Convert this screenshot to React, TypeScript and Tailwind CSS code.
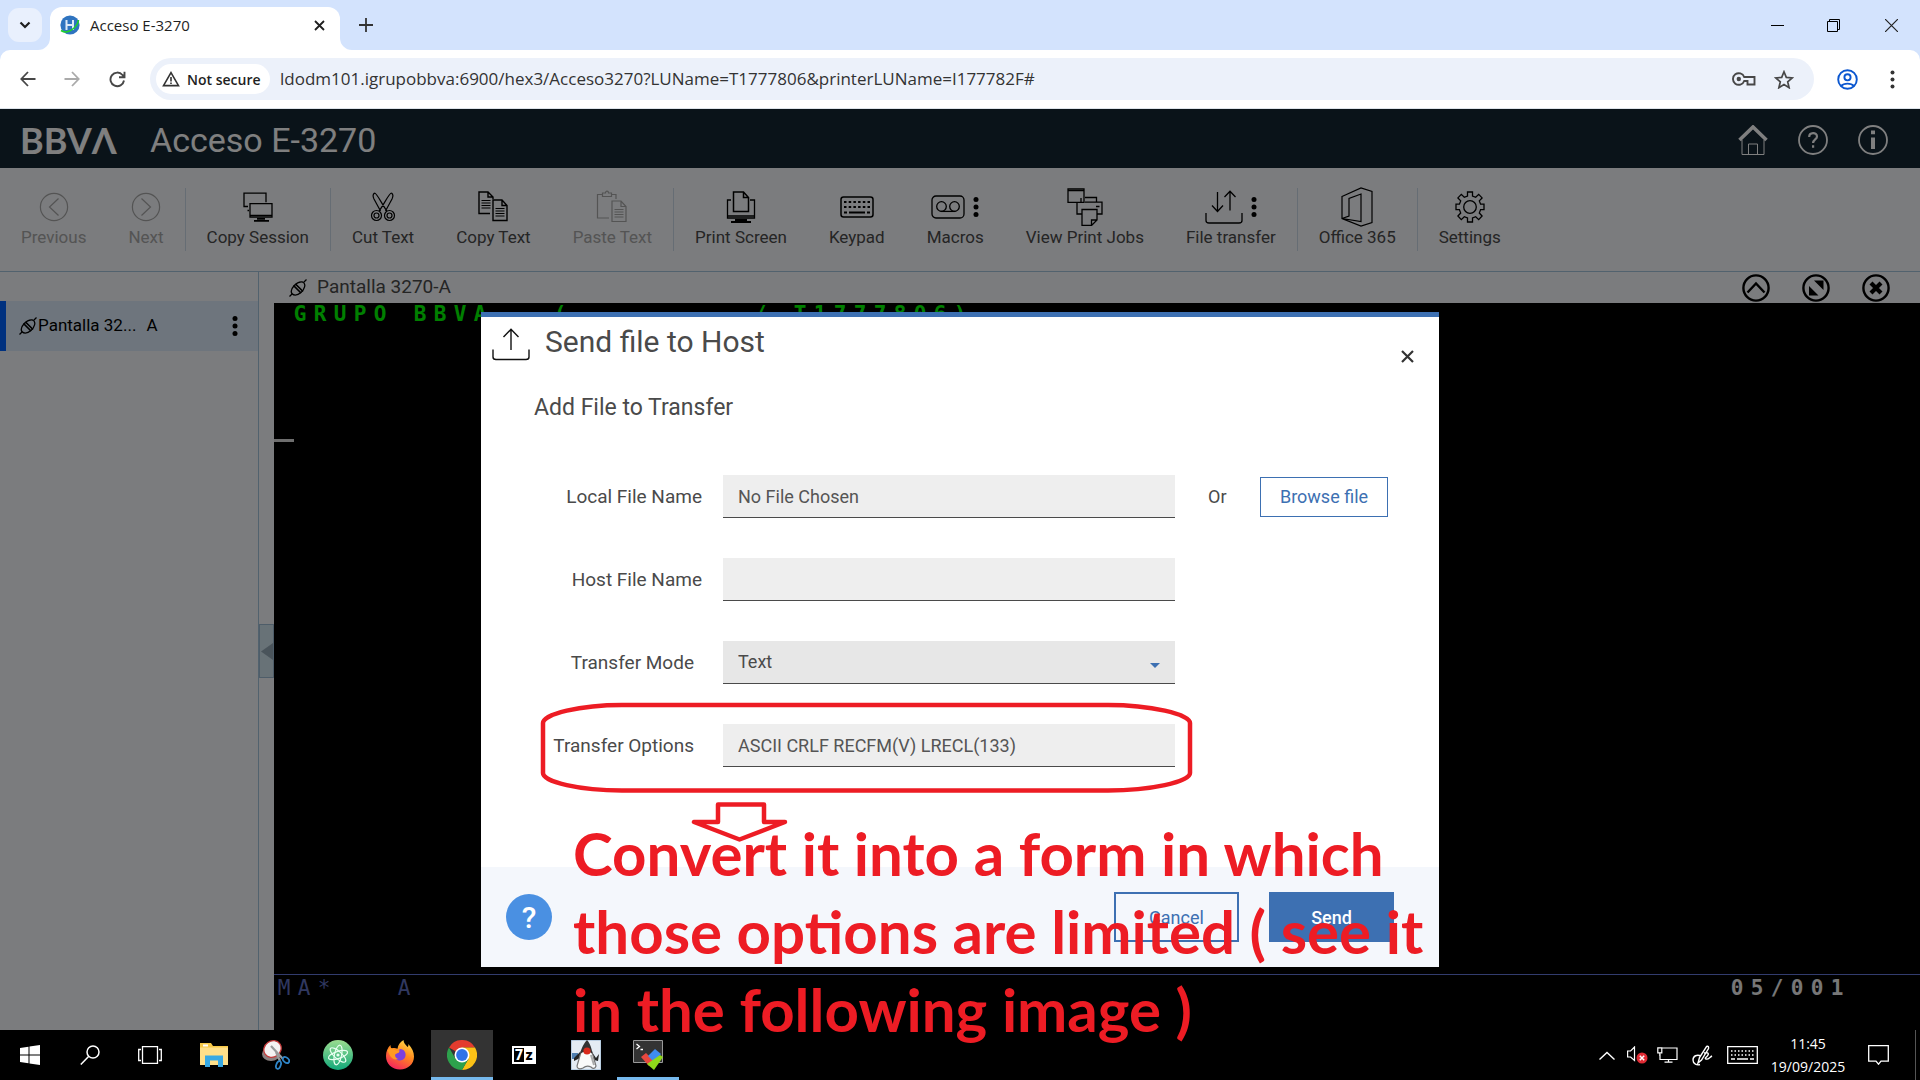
import type { ReactNode } from 'react'

type IconProps = { className?: string }

/* ---------- Browser icons ---------- */

function Favicon() {
  return (
    <svg width="20" height="20" viewBox="0 0 20 20" fill="none">
      <circle cx="10" cy="10" r="9.6" fill="#2f74c0" />
      <path d="M6.5 5v10M13 5v10M6.5 10H13" stroke="#dce9f7" strokeWidth="2" />
      <path d="M1 15.500c4 2.500 9 1 12.500-2C16 11.500 18 8.500 18.500 5" stroke="#1fd02a" strokeWidth="1.600" />
    </svg>
  )
}

function Dots({ className }: IconProps) {
  return (
    <svg className={className} width="6" height="20" viewBox="0 0 6 20" fill="currentColor">
      <circle cx="3" cy="2.600" r="2.500" />
      <circle cx="3" cy="10" r="2.500" />
      <circle cx="3" cy="17.400" r="2.500" />
    </svg>
  )
}

function BrowserTop() {
  return (
    <div className="bg-[#d3e3fd] font-['Open_Sans','Noto_Sans',sans-serif]">
      <div className="flex h-[50px] items-stretch pl-2">
        <button aria-label="Search tabs" className="mt-2 flex h-[34px] w-[34px] items-center justify-center rounded-[11px] bg-[#e9f0fd]">
          <svg width="12" height="8" viewBox="0 0 12 8" fill="none" stroke="#1f1f1f" strokeWidth="2.200">
            <path d="M1.500 1.500 6 6l4.500-4.500" />
          </svg>
        </button>
        <div className="relative mt-[7px] ml-2 flex w-[290px] items-center rounded-t-[12px] bg-white pr-[11px] pb-[7px] pl-[10px]">
          <svg className="absolute bottom-0 -left-3" width="12" height="12" fill="#fff"><path d="M12 0v12H0A12 12 0 0 0 12 0z" /></svg>
          <svg className="absolute -right-3 bottom-0" width="12" height="12" fill="#fff"><path d="M0 0v12h12A12 12 0 0 1 0 0z" /></svg>
          <Favicon />
          <span className="ml-[10px] flex-1 text-[15px] text-[#1f1f1f]">Acceso E-3270</span>
          <button aria-label="Close tab" className="p-1">
            <svg width="11" height="11" viewBox="0 0 11 11" stroke="#1f1f1f" strokeWidth="1.800"><path d="m1 1 9 9M10 1l-9 9" /></svg>
          </button>
        </div>
        <button aria-label="New tab" className="ml-[19px]">
          <svg width="14" height="14" viewBox="0 0 14 14" stroke="#333" strokeWidth="1.800"><path d="M7 0v14M0 7h14" /></svg>
        </button>
        <div className="ml-auto flex items-center">
          <button aria-label="Minimize" className="flex w-[56px] justify-center">
            <svg width="13" height="13" stroke="#000"><path d="M0 6.500h13" /></svg>
          </button>
          <button aria-label="Restore" className="flex w-[57px] justify-center">
            <svg width="13" height="13" fill="none" stroke="#000"><path d="M.5 2.500h10v10H.5zM2.500 2.500v-2h10v10h-2" /></svg>
          </button>
          <button aria-label="Close" className="flex w-[58px] justify-center">
            <svg width="13" height="13" stroke="#222" strokeWidth="1.200"><path d="m0 0 13 13M13 0 0 13" /></svg>
          </button>
        </div>
      </div>
      <div className="flex h-[59px] items-center rounded-t-[10px] border-b border-[#dde3ea] bg-white">
        <div className="flex w-[150px] items-center text-[#474747]">
          <button aria-label="Back" className="ml-5">
            <svg width="16" height="16" viewBox="0 0 16 16" fill="none" stroke="currentColor" strokeWidth="1.800"><path d="M15.500 8H1.500M8 1 1.300 8 8 15" /></svg>
          </button>
          <button aria-label="Forward" className="ml-7 text-[#aaa]">
            <svg width="16" height="16" viewBox="0 0 16 16" fill="none" stroke="currentColor" strokeWidth="1.800"><path d="M.5 8h14M8 1l6.700 7L8 15" /></svg>
          </button>
          <button aria-label="Reload" className="ml-[29px]">
            <svg width="17" height="17" viewBox="0 0 17 17" fill="none" stroke="currentColor" strokeWidth="1.900"><path d="M15 9.500A6.800 6.800 0 1 1 13.500 4L15.500 6M15.500.8V6.300H10" /></svg>
          </button>
        </div>
        <div className="flex h-[42px] flex-1 items-center rounded-full bg-[#ecf1fa] px-[6px]">
          <button className="flex h-[30px] w-[114px] items-center gap-[7px] rounded-full bg-white pl-[6px] text-[14px] font-semibold whitespace-nowrap text-[#1f1f1f]">
            <svg width="18" height="16" viewBox="0 0 18 16" fill="none" stroke="#333" strokeWidth="1.600"><path d="M9 1.600 16.500 14.600h-15zM9 6v4.500M9 11.400v1.700" /></svg>
            Not secure
          </button>
          <input
            aria-label="Address"
            className="ml-[10px] min-w-0 flex-1 bg-transparent text-[17px] text-[#333] outline-none"
            defaultValue="ldodm101.igrupobbva:6900/hex3/Acceso3270?LUName=T1777806&printerLUName=I177782F#"
          />
          <button aria-label="Passwords">
            <svg width="24" height="14" viewBox="0 0 24 14" fill="none" stroke="#474747" strokeWidth="1.900">
              <path d="M12.200 5A5.800 5.800 0 1 0 12.200 9H15.500V12.500H22.500V5z" />
              <circle cx="6.800" cy="7" r="2.200" fill="#474747" stroke="none" />
            </svg>
          </button>
          <button aria-label="Bookmark this tab" className="mr-[14px] ml-[18px]">
            <svg width="20" height="19" viewBox="0 0 20 19" fill="none" stroke="#474747" strokeWidth="1.700"><path d="m10 1.800 2.300 5.600 6 .5-4.600 3.900 1.400 5.900L10 14.600l-5.100 3.100 1.400-5.900L1.700 7.900l6-.5z" /></svg>
          </button>
        </div>
        <button aria-label="Profile" className="ml-[23px]">
          <svg width="21" height="21" viewBox="0 0 21 21" fill="none" stroke="#0b57d0" strokeWidth="1.900">
            <circle cx="10.500" cy="10.500" r="9.300" />
            <circle cx="10.500" cy="8.300" r="3.100" />
            <path d="M4 17c3-3.200 10-3.200 13 0" />
          </svg>
        </button>
        <button aria-label="Chrome menu" className="mr-[25px] ml-[32px]">
          <svg width="5" height="19" viewBox="0 0 5 19" fill="#333"><circle cx="2.500" cy="2.500" r="2" /><circle cx="2.500" cy="9.500" r="2" /><circle cx="2.500" cy="16.500" r="2" /></svg>
        </button>
      </div>
    </div>
  )
}

/* ---------- Application header ---------- */

function AppHeader() {
  return (
    <header className="flex h-[59px] items-center bg-[#142633] pt-0.5 pl-5 text-white">
      <span className="w-[130px] font-['Lato',sans-serif] text-[36px] leading-[40px] font-bold">BBVΛ</span>
      <h1 className="text-[34px] leading-[40px]">Acceso E-3270</h1>
      <div className="mr-8 ml-auto flex items-center gap-[30px]">
        <a href="#home" aria-label="Home">
          <svg width="30" height="30" viewBox="0 0 30 30" fill="none" stroke="currentColor">
            <path d="M1.500 15 15 2l13.500 13" strokeWidth="3.600" />
            <path d="M4 15v14.500h22V15M10.500 29.500v-10.500h9v10.500" strokeWidth="1" />
          </svg>
        </a>
        <a href="#help" aria-label="Help">
          <svg width="30" height="30" viewBox="0 0 30 30" fill="none" stroke="currentColor" strokeWidth="1.800">
            <circle cx="15" cy="15" r="14" />
            <path d="M11.200 12c0-5 7.800-5 7.800-.6 0 3-3.900 3-3.900 6.600M15.100 20.200v2.600" strokeWidth="2.200" />
          </svg>
        </a>
        <a href="#about" aria-label="About">
          <svg width="30" height="30" viewBox="0 0 30 30" fill="none" stroke="currentColor" strokeWidth="1.800">
            <circle cx="15" cy="15" r="14" />
            <path d="M15 12.500v11.500M15 5.500v3.800" strokeWidth="4" />
          </svg>
        </a>
      </div>
    </header>
  )
}

/* ---------- Toolbar ---------- */

function Arrowed({ next }: { next?: boolean }) {
  return (
    <svg width="30" height="30" viewBox="0 0 30 30" fill="none" stroke="currentColor" strokeWidth="1.200">
      <circle cx="15" cy="15" r="13.600" />
      <path d={next ? 'm10.500 6.500 9 8.500-9 8.500' : 'm19.500 6.500-9 8.500 9 8.500'} />
    </svg>
  )
}

const page = (x: number, y: number) => (
  <>
    <path d={`M${x} ${y}h9l5 5.500v15h-14zM${x + 9} ${y}v5.500h5`} />
    <path d={`M${x + 2.5} ${y + 8.5}h9M${x + 2.5} ${y + 11}h9M${x + 2.5} ${y + 13.5}h9M${x + 2.5} ${y + 16}h9`} strokeWidth="1" />
  </>
)

const icons: Record<string, ReactNode> = {
  copySession: (
    <svg width="30" height="30" viewBox="0 0 30 30" fill="none" stroke="currentColor" strokeWidth="1.300">
      <path d="M5 14.500H1V1.200h22v9M4.500 18.500h1.500" />
      <path d="M7 11.700h22v13.500H7zM7 23.500h22" />
      <path d="M14 26.800h8M11 28.800h15" strokeWidth="1.800" />
    </svg>
  ),
  cut: (
    <svg width="26" height="30" viewBox="0 0 26 30" fill="none" stroke="currentColor" strokeWidth="1.200">
      <path d="M4.500 1C2.500 2.500 3 5 4 7l6.500 12M4.500 1c2.500 0 8 12.500 12.500 18M21.500 1C23.500 2.500 23 5 22 7l-6.500 12M21.500 1C19 1 13.500 13.500 9 19" />
      <circle cx="6.500" cy="23.500" r="5" /><circle cx="6.500" cy="23.500" r="2.500" />
      <circle cx="19.500" cy="23.500" r="5" /><circle cx="19.500" cy="23.500" r="2.500" />
    </svg>
  ),
  copy: (
    <svg width="30" height="32" viewBox="0 0 30 32" fill="none" stroke="currentColor" strokeWidth="1.400">
      <path d="M12 22.500H1V1h9l5 5v2M10 1v5h5" />
      <path d="M3.500 9.500h9M3.500 12h9M3.500 14.500h9M3.500 17h9" strokeWidth="1" />
      {page(15, 9)}
    </svg>
  ),
  paste: (
    <svg width="32" height="34" viewBox="0 0 32 34" fill="none" stroke="currentColor" strokeWidth="1.200">
      <path d="M13 28H1.500V4.500H6M15 4.500h5V9M6.500 3h3c0-2.500 3-2.500 3 0h3v3.500h-9z" />
      {page(16, 11)}
    </svg>
  ),
  print: (
    <svg width="30" height="32" viewBox="0 0 30 32" fill="none" stroke="currentColor" strokeWidth="1.300">
      <path d="M5 9H1.500v18h27V9H24M1.500 25h27" />
      <path d="M7.500 1h10l5 5.500v14h-15zM17.500 1v5.500h5" strokeWidth="1.500" />
      <path d="M9 29h12M5 31h20" strokeWidth="1.800" />
    </svg>
  ),
  keypad: (
    <svg width="34" height="22" viewBox="0 0 34 22" fill="none" stroke="currentColor" strokeWidth="1.500">
      <rect x="1" y="1" width="32" height="20" rx="2.500" />
      <path d="M4 6h26M4 11h26" strokeWidth="2.200" strokeDasharray="2.500 2.200" />
      <path d="M4 16.500h3M9 16.500h16M27 16.500h3" strokeWidth="2.200" />
    </svg>
  ),
  macros: (
    <svg width="34" height="24" viewBox="0 0 34 24" fill="none" stroke="currentColor" strokeWidth="1.300">
      <rect x="1" y="1" width="32" height="22" rx="4" />
      <circle cx="10.500" cy="11.500" r="4.800" /><circle cx="23.500" cy="11.500" r="4.800" />
      <path d="M9.500 16.400h15" />
    </svg>
  ),
  jobs: (
    <svg width="36" height="38" viewBox="0 0 36 38" fill="none" stroke="currentColor" strokeWidth="1.300">
      <path d="M1 .8h16v13.500H1zM1 2.500h16M14 10v4M18 9.500h11.500V14M18 14.200h17V26h-5M10 15v11h5" />
      <path d="M15 21.500h15v10.500l-5.500 5.500H15zM24.500 37.500V32H30M29 18.500h3.500" />
    </svg>
  ),
  transfer: (
    <svg width="38" height="34" viewBox="0 0 38 34" fill="none" stroke="currentColor" strokeWidth="1.300">
      <path d="M12.500 2v19M7 15.500l5.500 6 5.500-6M25 20.500v-19M19.500 7 25 1.300 30.500 7M1 23v7.500q0 2.500 3 2.500h30q3 0 3-2.500V23" />
    </svg>
  ),
  office: (
    <svg width="32" height="40" viewBox="0 0 32 40" fill="none" stroke="currentColor" strokeWidth="1.200">
      <path d="M1 9.500 20 1l11 3.500v31L20 39 1 31.500zM1 31.500l7-2.500V11.500L20 7v27.500L1 31.500" />
    </svg>
  ),
  settings: (
    <svg width="30" height="32" viewBox="0 0 30 32" fill="none" stroke="currentColor" strokeWidth="1.300">
      <circle cx="15" cy="16" r="6.300" />
      <path d="M12.500 1h5v4l3.200 1.300 3-2.900 3.400 3.500-2.800 3L25.600 13.200H29v5.400h-3.400L24.300 22l2.800 3-3.400 3.600-3-2.900-3.200 1.300v4h-5v-4l-3.200-1.300-3 2.900L2.900 25l2.800-3-1.300-3.400H1v-5.400h3.400L5.700 9.900l-2.800-3L6.300 3.400l3 2.900L12.500 5z" />
    </svg>
  ),
}

type Tool = { label: string; icon: ReactNode; menu?: boolean; disabled?: boolean; divider?: boolean }

const tools: Tool[] = [
  { label: 'Previous', icon: <Arrowed />, disabled: true },
  { label: 'Next', icon: <Arrowed next />, disabled: true, divider: true },
  { label: 'Copy Session', icon: icons.copySession, divider: true },
  { label: 'Cut Text', icon: icons.cut },
  { label: 'Copy Text', icon: icons.copy },
  { label: 'Paste Text', icon: icons.paste, disabled: true, divider: true },
  { label: 'Print Screen', icon: icons.print },
  { label: 'Keypad', icon: icons.keypad },
  { label: 'Macros', icon: icons.macros, menu: true },
  { label: 'View Print Jobs', icon: icons.jobs },
  { label: 'File transfer', icon: icons.transfer, menu: true, divider: true },
  { label: 'Office 365', icon: icons.office, divider: true },
  { label: 'Settings', icon: icons.settings },
]

function Toolbar() {
  return (
    <nav className="flex border-b border-[#a5c4dc] bg-[#f6f8fc]">
      {tools.map(tool => (
        <div key={tool.label} className="flex">
          <button disabled={tool.disabled} className="flex flex-col items-center px-[21px] pt-[21px] pb-[22px] text-black disabled:text-[#a8a8a8]">
            <span className="flex h-9 items-center gap-2">
              {tool.icon}
              {tool.menu && <Dots />}
            </span>
            <span className={tool.disabled ? 'text-[17px] leading-6' : 'text-[17px] leading-6 text-[#4a4a4a]'}>{tool.label}</span>
          </button>
          {tool.divider && <span className="my-5 w-px bg-[#cddbe9]" />}
        </div>
      ))}
    </nav>
  )
}

/* ---------- Sessions ---------- */

function Plug() {
  return (
    <svg width="18" height="18" viewBox="0 0 18 18" fill="none" stroke="#000" strokeWidth="1.300">
      <path d="M.5 17.500 3.500 14.500M14.500 3.500l3-3" />
      <path d="M3 14.800C0 10 8 2 13.500 3 18 4.500 15 11 12 13.500 9 16 5.500 17 3 14.800z" />
      <path d="M4.500 6.500 12 14M6.500 5l7.500 7.500" strokeWidth="1.700" />
    </svg>
  )
}

function Sidebar() {
  return (
    <aside className="w-[259px] shrink-0 border-r border-[#a5c4dc] pt-[29px]">
      <div className="flex h-[50px] items-center border-l-6 border-[#0062ff] bg-[#dcebfa] pr-5 pl-[13px] text-[17px] text-black">
        <Plug />
        <a href="#session-a" className="ml-px">Pantalla 32...</a>
        <span className="ml-[10px] flex-1">A</span>
        <button aria-label="Session options"><Dots /></button>
      </div>
    </aside>
  )
}

/* One fixed-width cell for every character of a terminal row */
function Row({ text }: { text: string }) {
  return (
    <div className="flex whitespace-pre">
      {text.split('').map((char, i) => <span key={i} className="w-5 text-center">{char}</span>)}
    </div>
  )
}

function Terminal() {
  return (
    <section className="flex min-w-0 flex-1 flex-col">
      <div className="flex h-[31px] shrink-0 items-center pr-[30px] pl-[15px]">
        <Plug />
        <h2 className="ml-[10px] text-[19px] text-[#4a4a4a]">Pantalla 3270-A</h2>
        <div className="ml-auto flex gap-8 text-black">
          <button aria-label="Collapse">
            <svg width="28" height="28" viewBox="0 0 28 28" fill="none" stroke="currentColor" strokeWidth="2.400"><circle cx="14" cy="14" r="12.600" /><path d="M5.500 18.500 14 9.500l8.500 9" /></svg>
          </button>
          <button aria-label="Detach">
            <svg width="28" height="28" viewBox="0 0 28 28" fill="none" stroke="currentColor" strokeWidth="2.400"><circle cx="14" cy="14" r="12.600" /><path d="M12 6.500h9.500V16zM7 12v9.500h9.500z" fill="currentColor" stroke="none" /></svg>
          </button>
          <button aria-label="Close session">
            <svg width="28" height="28" viewBox="0 0 28 28" fill="none" stroke="currentColor" strokeWidth="2.400"><circle cx="14" cy="14" r="12.600" /><path d="m9 9 10 10M19 9 9 19" strokeWidth="4.200" /></svg>
          </button>
        </div>
      </div>
      <div className="flex flex-1 flex-col bg-black font-['DejaVu_Sans_Mono','Liberation_Mono',monospace] text-[21px] leading-[22px]">
        <div className="pl-4 font-bold text-[#00ff00]">
          <Row text="GRUPO BBVA   (         / T1777806)" />
        </div>
        <div className="mt-[114px] h-[3px] w-5 bg-[#ddd]" />
        <div className="mt-auto flex h-[56px] justify-between border-t border-[#6478dc] pt-0.5 pr-[73px]">
          <div className="text-[#6070c0]"><Row text="MA*   A" /></div>
          <div className="font-bold text-[#eee]"><Row text="05/001" /></div>
        </div>
      </div>
    </section>
  )
}

/* ---------- Send file dialog ---------- */

const field = 'h-[43px] w-[452px] border-b border-[#4a4a4a] bg-[#eee] px-[15px] text-[18px] text-[#555] outline-none'

function Notes() {
  return (
    <>
      <svg className="absolute top-[385px] left-[59px]" width="654" height="92" viewBox="0 0 654 92" fill="none" stroke="#ed1c24" strokeWidth="4.500">
        <path d="M82 3H568C610 3 650 12 650 21V71C650 80 610 88.500 568 88.500H82C40 88.500 3 80 3 71V21C3 12 40 3 82 3z" />
      </svg>
      <svg className="absolute top-[484px] left-[209px]" width="98" height="42" viewBox="0 0 98 42" fill="none" stroke="#ed1c24" strokeWidth="4.500" strokeLinejoin="round">
        <path d="M28 3.500H74V21H95L49.500 38.500 4 21H28z" />
      </svg>
      <p className="absolute top-[497px] left-[92px] font-['Lato',sans-serif] text-[60px] leading-[78px] font-bold whitespace-nowrap text-[#ed1c24]">
        Convert it into a form in which<br />
        those options are limited ( see it<br />
        in the following image )
      </p>
    </>
  )
}

function SendDialog() {
  return (
    <div className="absolute inset-0 z-10 flex justify-center bg-black/50 pt-[203px]">
      <div role="dialog" aria-labelledby="dialog-title" className="relative flex h-[655px] w-[958px] flex-col border-t-5 border-[#3d70b2] bg-white text-[#4a4a4a]">
        <div className="flex items-start pt-[11px] pr-[25px] pl-[11px]">
          <svg width="38" height="33" viewBox="0 0 38 33" fill="none" stroke="#111" strokeWidth="1.400">
            <path d="M19 22V1.500M11.500 9 19 1.300 26.500 9M1 21.500V29q0 2.500 3 2.500h30q3 0 3-2.500v-7.500" />
          </svg>
          <h2 id="dialog-title" className="-mt-1 ml-[15px] text-[30px] leading-9">Send file to Host</h2>
          <button aria-label="Close dialog" className="mt-[22px] ml-auto">
            <svg width="13" height="13" viewBox="0 0 13 13" stroke="#333" strokeWidth="2.200"><path d="m1 1 11 11M12 1 1 12" /></svg>
          </button>
        </div>
        <h3 className="mt-[31px] ml-[53px] text-[23px] leading-7">Add File to Transfer</h3>
        <form className="mt-[53px] flex flex-col gap-10 text-[19px] leading-6">
          <div className="flex items-center">
            <label htmlFor="local" className="w-[221px] text-right">Local File Name</label>
            <input id="local" readOnly defaultValue="No File Chosen" className={`ml-[21px] ${field}`} />
            <span className="ml-[33px] w-5 text-[18px]">Or</span>
            <button type="button" className="ml-8 h-10 w-[128px] border border-[#3d70b2] text-[18px] text-[#3d70b2]">Browse file</button>
          </div>
          <div className="flex items-center">
            <label htmlFor="host" className="w-[221px] text-right">Host File Name</label>
            <input id="host" className={`ml-[21px] ${field}`} />
          </div>
          <div className="flex items-center">
            <label htmlFor="mode" className="w-[213px] text-right">Transfer Mode</label>
            <div className="relative ml-[29px] flex">
              <select id="mode" className="h-[43px] w-[452px] appearance-none border-b border-[#4a4a4a] bg-[#e7e7e7] px-[15px] text-[18px] outline-none">
                <option>Text</option>
              </select>
              <svg className="pointer-events-none absolute top-[22px] right-[15px]" width="10" height="5" fill="#3d70b2"><path d="M0 0h10L5 5z" /></svg>
            </div>
          </div>
          <div className="flex items-center">
            <label htmlFor="options" className="w-[213px] text-right">Transfer Options</label>
            <input id="options" defaultValue="ASCII CRLF RECFM(V) LRECL(133)" className={`ml-[29px] ${field}`} />
          </div>
        </form>
        <footer className="mt-auto flex h-[100px] items-center bg-[#f4f7fc] pr-[45px] pl-[25px] text-[18px]">
          <button aria-label="Help" className="flex h-[46px] w-[46px] items-center justify-center rounded-full bg-[#4a90e2] text-[30px] font-medium text-white">?</button>
          <button className="ml-auto h-[50px] w-[125px] border-2 border-[#3d70b2] text-[#3d70b2]">Cancel</button>
          <button className="ml-[30px] h-[50px] w-[125px] bg-[#3d70b2] font-medium text-white">Send</button>
        </footer>
        <Notes />
      </div>
    </div>
  )
}

/* ---------- Taskbar ---------- */

const apps: { name: string; icon: ReactNode; active?: boolean; running?: boolean }[] = [
  {
    name: 'File Explorer',
    icon: (
      <svg width="28" height="24" viewBox="0 0 28 24">
        <path d="M0 0h11l2 3H28V22H0z" fill="#f7c948" /><path d="M0 4.500h28V22H0z" fill="#ffe08a" /><path d="M3 1.500h5v2H3z" fill="#fff" />
        <path d="M5 12.500h18V24h-5v-6.500h-8V24H5z" fill="#38a9e4" />
      </svg>
    ),
  },
  {
    name: 'Snipping Tool',
    icon: (
      <svg width="28" height="30" viewBox="0 0 28 30" fill="none">
        <ellipse cx="9" cy="14" rx="9" ry="7" fill="#8a8080" />
        <ellipse cx="10.500" cy="9" rx="9" ry="8" transform="rotate(-35 10.500 9)" fill="#f4f2f2" stroke="#c43a3a" strokeWidth="1.300" />
        <path d="m9 6 12 13M14 12l4 9" stroke="#999" strokeWidth="2.200" />
        <ellipse cx="24" cy="20" rx="3.600" ry="2.400" transform="rotate(40 24 20)" stroke="#2f86c9" strokeWidth="1.800" />
        <ellipse cx="16.500" cy="25" rx="2.200" ry="4" transform="rotate(20 16.500 25)" stroke="#2f86c9" strokeWidth="1.800" />
      </svg>
    ),
  },
  {
    name: 'Atom',
    icon: (
      <svg width="30" height="30" viewBox="0 0 30 30" fill="none" stroke="#e9fff1" strokeWidth="1.200">
        <defs><linearGradient id="atom" x2="0" y2="1"><stop stopColor="#9bdc8f" /><stop offset="1" stopColor="#12a87a" /></linearGradient></defs>
        <circle cx="15" cy="15" r="15" fill="url(#atom)" stroke="none" />
        <ellipse cx="15" cy="15" rx="3.600" ry="10" transform="rotate(12 15 15)" />
        <ellipse cx="15" cy="15" rx="3.600" ry="10" transform="rotate(72 15 15)" />
        <ellipse cx="15" cy="15" rx="3.600" ry="10" transform="rotate(132 15 15)" />
        <circle cx="15" cy="15" r="1.600" fill="#e9fff1" stroke="none" />
      </svg>
    ),
  },
  {
    name: 'Firefox',
    icon: (
      <svg width="28" height="30" viewBox="0 0 28 30">
        <defs><linearGradient id="fox" x1=".8" y1="0" x2=".3" y2="1"><stop stopColor="#ffe14d" /><stop offset=".45" stopColor="#ff8a1e" /><stop offset="1" stopColor="#f6225e" /></linearGradient></defs>
        <path d="M17.500 0c0 3 2 4.500 4 7 1-.5 1-2 .8-3C26 8 28 12 28 16.500 28 24 22 29.500 14 29.500S0 24 0 16C0 11.500 1.500 8 4.500 5c0 1.500.3 2.500 1 3.500 2-.8 4-.6 6 .2C12 5 14 2 17.500 0z" fill="url(#fox)" />
        <path d="M13.500 9c4.500-.5 7.500 4 5.500 8.500-2 3.800-8.500 4-10.500 0-1-2 0-3.500 1.500-4L13 12.500z" fill="#7a3fe0" />
        <path d="M1.500 10 5 8l5 2.500 3.500.5c-.5 2-2.500 2-4 3-1 1.500 0 4.500 3 5-6 2-9-3-11-9z" fill="#ff9a22" />
      </svg>
    ),
  },
  {
    name: 'Google Chrome',
    active: true,
    running: true,
    icon: (
      <svg width="30" height="30" viewBox="0 0 30 30">
        <path d="M15 15 2 7.500A15 15 0 0 1 28 7.500H15z" fill="#e33b2e" />
        <path d="M15 15 21.500 18.750 15 30A15 15 0 0 0 28 7.500H15z" fill="#fbc116" />
        <path d="M15 15 8.500 18.750 2 7.500A15 15 0 0 0 15 30l6.500-11.250z" fill="#2da14c" />
        <circle cx="15" cy="15" r="7.500" fill="#fff" /><circle cx="15" cy="15" r="5.900" fill="#2f73e8" />
      </svg>
    ),
  },
  {
    name: '7-Zip',
    icon: (
      <span className="flex h-[18px] w-6 items-center bg-white p-0.5 text-[14px] leading-[14px] font-black">
        <span className="w-[10px] bg-black text-center text-white">7</span>
        <span className="flex-1 text-center text-black">z</span>
      </span>
    ),
  },
  {
    name: 'Java',
    icon: (
      <svg width="30" height="30" viewBox="0 0 30 30">
        <path d="M0 0h30v30H0z" fill="#e4ebf3" stroke="#8fb0cf" />
        <path d="M1 13h6v6H1z" fill="#4f7fb0" />
        <path d="M9 12 3 18v3l6-3M21 12l4 6 3-4-1 7-4-1" fill="#222" />
        <path d="M10 12c3-3 8-3 11 0l4 14c-1 3-3 3-5 1-3-1.500-5-1.500-8 1-3 1.500-6 1-6-2z" fill="#fafafa" stroke="#777" strokeWidth="1.200" />
        <path d="M16 0c-3 3-6 9-7 14 3-3 10-3 12.500 0C21 9 19 3 16 0z" fill="#333" />
        <circle cx="16" cy="11" r="3.600" fill="#d92a1c" />
        <path d="M20 15l3 10" stroke="#aaa" strokeWidth="2" />
      </svg>
    ),
  },
  {
    name: 'MobaXterm',
    running: true,
    icon: (
      <svg width="30" height="30" viewBox="0 0 30 30">
        <path d="M.5.5h29v22H.5z" fill="#333" stroke="#999" />
        <path d="m3.500 4 3 2.500-3 2.500M7.500 9.500H10" stroke="#fff" fill="none" strokeWidth="1.300" />
        <path d="m8 17 5-4 8 8-5 5z" fill="#e8483f" /><path d="m15 16 7-7 6 5-7 8z" fill="#3f8cf0" /><path d="m14 24 13-9 3 2-9 13z" fill="#8fd91a" />
      </svg>
    ),
  },
]

function Taskbar() {
  return (
    <div className="flex h-[50px] shrink-0 bg-black text-white">
      <button aria-label="Start" className="flex w-[60px] items-center justify-center">
        <svg width="20" height="20" viewBox="0 0 20 20" fill="#fff"><path d="M0 3 8.500 1.700V9.500H0zM9.500 1.500 20 0v9.500H9.500zM0 10.500h8.500v7.800L0 17zM9.500 10.500H20V20L9.500 18.500z" /></svg>
      </button>
      <button aria-label="Search" className="flex w-[60px] items-center justify-center">
        <svg width="20" height="20" viewBox="0 0 20 20" fill="none" stroke="#fff" strokeWidth="1.500"><circle cx="13" cy="7" r="6" /><path d="M8.800 11.300.8 19.500" /></svg>
      </button>
      <button aria-label="Task View" className="mr-[3px] flex w-[60px] items-center justify-center">
        <svg width="24" height="18" viewBox="0 0 24 18" fill="none" stroke="#fff" strokeWidth="1.300"><path d="M4.500.7h15v16.600h-15zM3 3.500H.7v11H3M21 3.500h2.300v11H21" /></svg>
      </button>
      {apps.map(app => (
        <button
          key={app.name}
          aria-label={app.name}
          className={`flex w-[62px] items-center justify-center border-y-3 border-t-transparent ${app.active ? 'bg-[#333]' : ''} ${app.running ? 'border-b-[#76b9ed]' : 'border-b-transparent'}`}
        >
          {app.icon}
        </button>
      ))}
      <div className="ml-auto flex items-center pr-1">
        <svg width="16" height="9" viewBox="0 0 16 9" fill="none" stroke="#fff" strokeWidth="1.400"><path d="m.5 8.500 7.500-7 7.500 7" /></svg>
        <svg className="ml-3" width="21" height="18" viewBox="0 0 21 18" fill="none" stroke="#fff" strokeWidth="1.200">
          <path d="M.6 5h3L7.500 1v13.500L3.600 11h-3z" />
          <circle cx="15" cy="12" r="5.500" fill="#e02b34" stroke="none" /><path d="m12.800 9.800 4.400 4.400M17.200 9.800l-4.400 4.400" strokeWidth="1.500" />
        </svg>
        <svg className="ml-[9px]" width="21" height="16" viewBox="0 0 21 16" fill="none" stroke="#fff" strokeWidth="1.200"><path d="M4.500 1H20v11.500H3V7M.8.800h4v5h-4zM2.800 6v3M11.500 12.500V15M7.500 15.200h8" /></svg>
        <svg className="ml-[14px]" width="21" height="21" viewBox="0 0 21 21" fill="none" stroke="#fff" strokeWidth="1.400">
          <path d="M6 18 7.500 12.500 14.500 1.500q2.500-1 2 2L9.500 15zM9 11c-4-2-8 0-8 4s4 5.500 7 4.500M12 8c3-1 5 0 4 2s-4 3-2 4 4-2 6-3" />
        </svg>
        <svg className="ml-[14px]" width="31" height="18" viewBox="0 0 31 18" fill="none" stroke="#fff" strokeWidth="1.300">
          <path d="M.7.700h29.600v16.600H.7z" /><path d="M4 5h23M4 9h23" strokeDasharray="1.500 2" /><path d="M4 13h4M10 13h11M23 13h4" />
        </svg>
        <div className="w-[100px] text-center font-['Open_Sans','Noto_Sans',sans-serif] text-[14px] leading-[23px]">
          <div>11:45</div>
          <div>19/09/2025</div>
        </div>
        <button aria-label="Notifications" className="ml-[10px]">
          <svg width="21" height="20" viewBox="0 0 21 20" fill="none" stroke="#fff" strokeWidth="1.300"><path d="M.7.700h19.600v15.500H13l-2.500 3-2.500-3H.7z" /></svg>
        </button>
        <span className="ml-[26px] h-[50px] w-px bg-[#555]" />
      </div>
    </div>
  )
}

export default function App() {
  return (
    <div className="flex min-h-screen flex-col font-['Roboto',sans-serif]">
      <BrowserTop />
      <main className="relative flex flex-1 flex-col bg-[#f6f8fc]">
        <AppHeader />
        <Toolbar />
        <div className="flex flex-1">
          <Sidebar />
          <div className="flex w-[15px] items-center">
            <button aria-label="Hide sessions" className="flex h-[54px] w-[15px] items-center justify-end border border-[#9dbbd3] bg-[#d0e4ee]">
              <svg width="12" height="17" fill="#95a9b7"><path d="M12 0v17L0 8.500z" /></svg>
            </button>
          </div>
          <Terminal />
        </div>
        <SendDialog />
      </main>
      <Taskbar />
    </div>
  )
}
